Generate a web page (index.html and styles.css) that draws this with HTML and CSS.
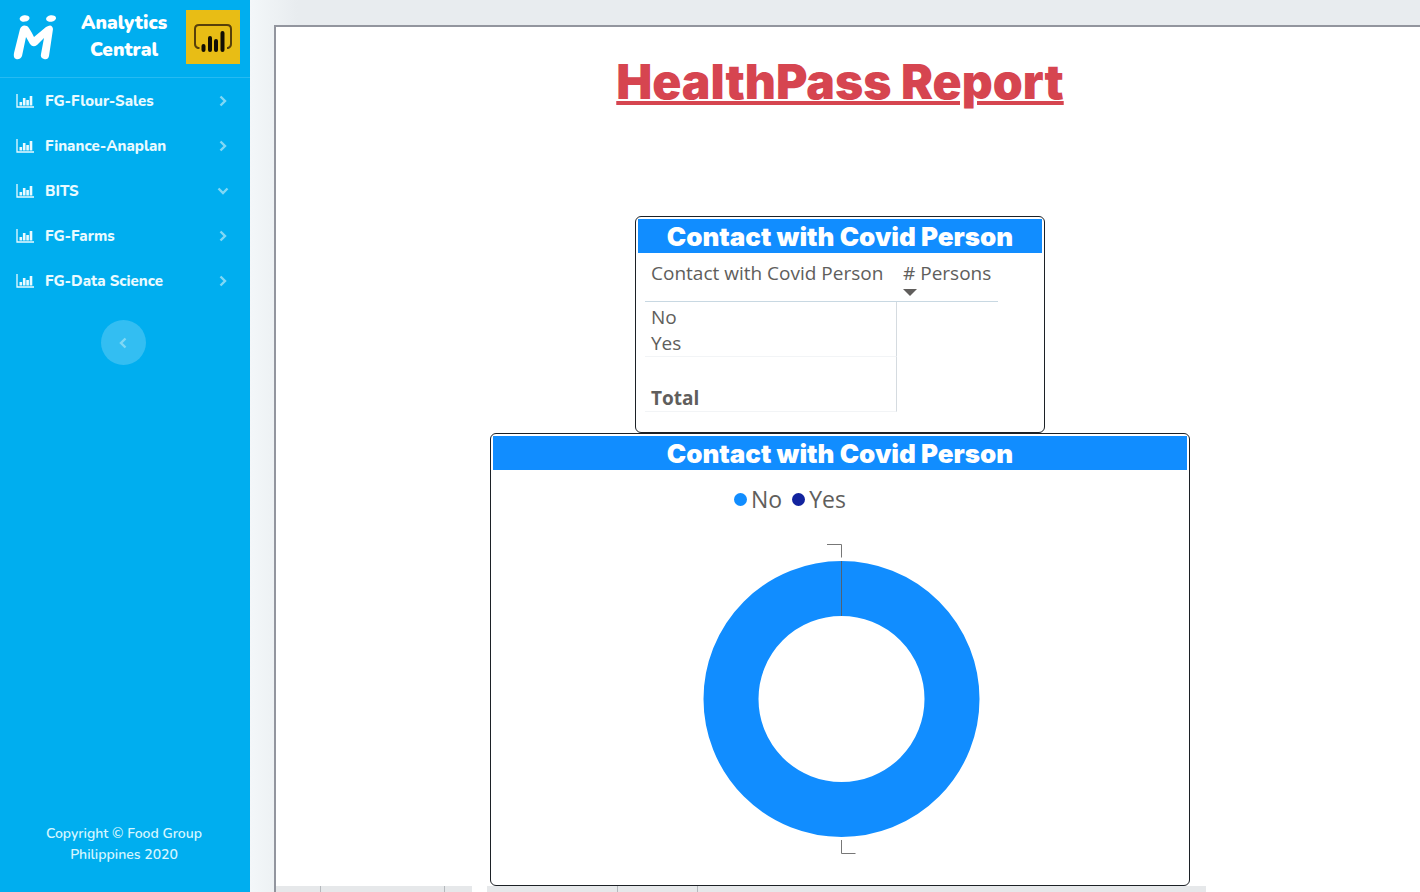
FILE: index.html
```
<!DOCTYPE html>
<html lang="en">
<head>
  <meta charset="UTF-8">
  <meta name="viewport" content="width=device-width, initial-scale=1.0">
  <title>Analytics Central</title>
  <link rel="stylesheet" href="styles.css">
</head>
<body>
  <svg class="sprite" aria-hidden="true">
    <symbol id="icon-chart" viewBox="0 0 18 14">
      <path d="M1 0v13h17" fill="none" stroke="currentColor" stroke-width="1.300"/>
      <path d="M4.800 11.500V8M8.200 11.500V4M11.600 11.500V6M15 11.500V2" fill="none" stroke="currentColor" stroke-width="2.600"/>
    </symbol>
    <symbol id="icon-chevron" viewBox="0 0 12 12">
      <path d="M3.500 1.500L8 6l-4.500 4.500" fill="none" stroke="currentColor" stroke-width="2.400"/>
    </symbol>
  </svg>

  <div class="wrapper">
    <aside class="sidebar">
      <a class="brand" href="#">
        <svg class="brand-mark" viewBox="0 0 44 46" aria-hidden="true">
          <ellipse cx="12.500" cy="4.500" rx="5" ry="3.200" fill="#fff" transform="rotate(-8 12 4)"/>
          <ellipse cx="39" cy="4.500" rx="5" ry="3.200" fill="#fff" transform="rotate(-8 39 4)"/>
          <path d="M8 15Q10 10 15 12Q17 13 22 23L34 13Q40 9 41 15L37 42Q36 46 32 45Q28 44 29 40L32 24L25 31Q21 34 18 30L14 23L10 42Q8 46 4 45Q1 44 2 39Z" fill="#fff"/>
        </svg>
        <span class="brand-text">Analytics Central</span>
        <svg class="brand-bi" viewBox="0 0 54 54" aria-hidden="true">
          <rect width="54" height="54" fill="#e8bd15"/>
          <path d="M13.500 38H12q-3-1-3-4V19q0-4 4-4h28q4 0 4 4v15q0 3-3 4h-1" fill="none" stroke="#57400a" stroke-width="2"/>
          <path d="M17.500 36v4M24 28v12M30 31v9M36.500 23v17" fill="none" stroke="#130f04" stroke-width="4" stroke-linecap="round"/>
        </svg>
      </a>

      <nav class="menu">
        <a class="menu-item" href="#"><svg class="menu-icon"><use href="#icon-chart"/></svg><span>FG-Flour-Sales</span><svg class="chevron"><use href="#icon-chevron"/></svg></a>
        <a class="menu-item" href="#"><svg class="menu-icon"><use href="#icon-chart"/></svg><span>Finance-Anaplan</span><svg class="chevron"><use href="#icon-chevron"/></svg></a>
        <a class="menu-item" href="#"><svg class="menu-icon"><use href="#icon-chart"/></svg><span>BITS</span><svg class="chevron chevron-down"><use href="#icon-chevron"/></svg></a>
        <a class="menu-item" href="#"><svg class="menu-icon"><use href="#icon-chart"/></svg><span>FG-Farms</span><svg class="chevron"><use href="#icon-chevron"/></svg></a>
        <a class="menu-item" href="#"><svg class="menu-icon"><use href="#icon-chart"/></svg><span>FG-Data Science</span><svg class="chevron"><use href="#icon-chevron"/></svg></a>
      </nav>

      <button class="toggle" type="button" aria-label="Collapse sidebar"><svg class="chevron chevron-left"><use href="#icon-chevron"/></svg></button>

      <footer class="copyright">Copyright © Food Group<br>Philippines 2020</footer>
    </aside>

    <main class="content">
      <div class="report">
        <h1>HealthPass Report</h1>

        <section class="card card-table">
          <h2>Contact with Covid Person</h2>
          <table>
            <thead>
              <tr>
                <th scope="col">Contact with Covid Person</th>
                <th scope="col"># Persons<span class="sort"></span></th>
              </tr>
            </thead>
            <tbody>
              <tr><td>No</td><td></td></tr>
              <tr><td>Yes</td><td></td></tr>
            </tbody>
            <tfoot>
              <tr><th scope="row">Total</th><td></td></tr>
            </tfoot>
          </table>
        </section>

        <section class="card card-chart">
          <h2>Contact with Covid Person</h2>
          <ul class="legend">
            <li><span class="dot dot-no"></span>No</li>
            <li><span class="dot dot-yes"></span>Yes</li>
          </ul>
          <svg class="donut" viewBox="-4 0 284 316" role="img" aria-label="Contact with Covid Person">
            <circle cx="139.500" cy="158" r="110.500" fill="none" stroke="#118dff" stroke-width="55"/>
            <path d="M139.500 20v55" stroke="#4f6275" stroke-width="1"/>
            <path d="M125 3.500h14.500v13M139.500 299v13.500h14" fill="none" stroke="#777" stroke-width="1"/>
          </svg>
        </section>

        <div class="page-tabs">
          <span class="tab tab-first"></span>
          <span class="tab tab-wide"></span>
          <span class="tab tab-short"></span>
          <span class="tab tab-next"></span>
          <span class="tab tab-small"></span>
          <span class="tab tab-long"></span>
        </div>
      </div>
    </main>
  </div>
</body>
</html>
```
FILE: styles.css
```
* {
  box-sizing: border-box;
}

body {
  margin: 0;
  background: #e8ecef;
  font-family: 'Nunito', 'Open Sans', sans-serif;
}

.sprite {
  display: none;
}

.wrapper {
  display: flex;
  min-height: 100vh;
}

.sidebar {
  display: flex;
  flex-direction: column;
  flex: 0 0 250px;
  background: #00aeef;
  color: #fff;
}

.brand {
  display: flex;
  align-items: center;
  justify-content: space-between;
  height: 78px;
  padding: 0 10px 4px 12px;
  border-bottom: 1px solid #26baf2;
  color: #fff;
  text-decoration: none;
}

.brand-mark {
  width: 44px;
  height: 46px;
}

.brand-text {
  width: 104px;
  margin-left: 6px;
  font-size: 19px;
  font-weight: 900;
  line-height: 27px;
  text-align: center;
}

.brand-bi {
  width: 54px;
  height: 54px;
}

.menu-item {
  display: flex;
  align-items: center;
  height: 45px;
  padding: 0 21px 0 16px;
  color: #e9faff;
  font-size: 15px;
  font-weight: 800;
  text-decoration: none;
}

.menu-icon {
  width: 18px;
  height: 14px;
  margin-right: 11px;
}

.chevron {
  width: 12px;
  height: 12px;
  margin-left: auto;
  color: #80d8f5;
}

.chevron-down {
  transform: rotate(90deg);
}

.toggle {
  display: flex;
  align-items: center;
  justify-content: center;
  align-self: center;
  width: 45px;
  height: 45px;
  margin-top: 17px;
  margin-right: 4px;
  padding: 0;
  border: 0;
  border-radius: 50%;
  background: #33bef2;
  cursor: pointer;
}

.chevron-left {
  margin: 0;
  transform: rotate(180deg);
}

.copyright {
  margin-top: auto;
  padding: 0 2px 27px 0;
  color: #d5f6ff;
  font-size: 14px;
  font-weight: 600;
  line-height: 21px;
  text-align: center;
}

.content {
  display: flex;
  flex: 1;
  min-width: 0;
  padding: 25px 0 0 24px;
  background: linear-gradient(to right, #f3f7f9, #e8ecef 48px);
}

.report {
  display: flex;
  flex: 1;
  flex-direction: column;
  align-items: center;
  min-width: 0;
  padding-right: 16px;
  border-top: 2px solid #92959e;
  border-left: 2px solid #92959e;
  background: #fff;
}

h1 {
  margin: 25px 0 104px;
  color: #d64550;
  font-family: 'Arial Black', 'Inter', sans-serif;
  font-size: 48px;
  font-weight: 900;
  line-height: 60px;
  text-decoration: underline;
  text-decoration-thickness: 4px;
  text-underline-offset: 2px;
}

.card {
  width: 100%;
  padding: 2px;
  border: 1px solid #1c2126;
  border-radius: 6px;
}

.card h2 {
  margin: 0;
  padding-top: 2px;
  background: #118dff;
  color: #fff;
  font-family: 'Arial Black', 'Inter', sans-serif;
  font-size: 26px;
  font-weight: 900;
  line-height: 32px;
  text-align: center;
}

.card-table {
  max-width: 410px;
  height: 217px;
}

.card-chart {
  max-width: 700px;
  height: 453px;
}

table {
  width: 353px;
  margin-left: 7px;
  border-collapse: separate;
  border-spacing: 0;
  table-layout: fixed;
  color: #605e5c;
  font-family: 'Segoe UI', 'Open Sans', sans-serif;
  font-size: 19px;
  line-height: 26px;
}

th,
td {
  padding: 0 6px;
  text-align: left;
  white-space: nowrap;
}

thead th {
  height: 49px;
  padding-top: 7px;
  border-bottom: 1px solid #c8d8e2;
  font-weight: 400;
  vertical-align: top;
}

thead th:first-child {
  width: 252px;
}

tbody tr:first-child td {
  height: 28px;
  padding-top: 2px;
}

tbody td:first-child,
tfoot th {
  border-right: 1px solid #d5dbe0;
}

tbody tr:last-child td:first-child,
tfoot th {
  border-bottom: 1px solid #f2f4f6;
}

tfoot th {
  height: 55px;
  vertical-align: bottom;
}

.sort {
  display: block;
  width: 0;
  border: 7px solid transparent;
  border-top-color: #605e5c;
  border-bottom: 0;
  margin-top: 3px;
}

.legend {
  display: flex;
  justify-content: center;
  gap: 10px;
  margin: 12px 100px 25px 0;
  padding: 0;
  color: #605e5c;
  font-family: 'Segoe UI', 'Open Sans', sans-serif;
  font-size: 23px;
  line-height: 34px;
  list-style: none;
}

.legend li {
  display: flex;
  align-items: center;
  gap: 4px;
}

.dot {
  width: 13px;
  height: 13px;
  border-radius: 50%;
}

.dot-no {
  background: #118dff;
}

.dot-yes {
  background: #12239e;
}

.donut {
  display: block;
  width: 284px;
  height: 316px;
  margin: 0 auto;
}

/* page tabs along the bottom edge of the report */
.page-tabs {
  display: flex;
  align-self: stretch;
  flex: 1;
  min-height: 6px;
}

.tab {
  background: #e6e8ea;
  border-right: 1px solid #b5b9bd;
}

.tab-first {
  width: 45px;
}

.tab-wide {
  width: 124px;
}

.tab-short {
  width: 27px;
  margin-right: 15px;
  border: 0;
}

.tab-next {
  width: 131px;
}

.tab-small {
  width: 80px;
}

.tab-long {
  width: 508px;
  border: 0;
}
```
